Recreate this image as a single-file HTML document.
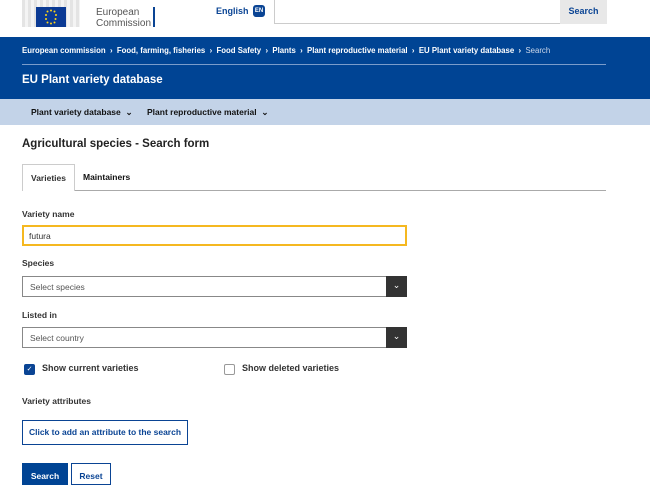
<!DOCTYPE html>
<html><head><meta charset="utf-8"><style>
*{box-sizing:border-box;margin:0;padding:0}
body{width:650px;height:483px;overflow:hidden;background:#fff;font-family:"Liberation Sans",Arial,sans-serif;color:#333;position:relative}
.a{position:absolute}
.b{font-weight:bold}
</style></head><body>
<div class="a" style="left:22px;top:0;width:58px;height:27px;background:repeating-linear-gradient(90deg,#e4e4e4 0 3px,#f4f4f4 3px 6px)"></div>
<div class="a" style="left:36px;top:7px;width:30px;height:20px;background:#0b3a94"></div>
<svg class="a" style="left:36px;top:7px" width="30" height="20"><g fill="#ffd617">
<circle cx="15" cy="3.5" r="1"/><circle cx="18.5" cy="4.5" r="1"/><circle cx="20" cy="8" r="1"/><circle cx="19.5" cy="12" r="1"/><circle cx="18.5" cy="15.5" r="1"/><circle cx="15" cy="16.5" r="1"/><circle cx="11.5" cy="15.5" r="1"/><circle cx="10" cy="12" r="1"/><circle cx="10" cy="8" r="1"/><circle cx="11.5" cy="4.5" r="1"/></g></svg>
<div class="a" style="left:96px;top:7px;font-size:10px;line-height:11px;color:#555">European<br>Commission</div>
<div class="a" style="left:153px;top:7px;width:1.5px;height:20px;background:#0a4494"></div>
<div class="a b" style="left:216px;top:6px;font-size:9px;color:#0a4494">English</div>
<div class="a b" style="left:253px;top:5px;width:12px;height:12px;border-radius:3px;background:#0a4494;color:#fff;font-size:6px;text-align:center;line-height:12px">EN</div>
<div class="a" style="left:274px;top:-1px;width:333px;height:25px;border:1px solid #ccc"></div>
<div class="a b" style="left:560px;top:0;width:47px;height:24px;background:#e8e8e8;font-size:9px;color:#0a4494;text-align:center;line-height:22px">Search</div>
<div class="a" style="left:0;top:37px;width:650px;height:62px;background:#004494"></div>
<div class="a b" style="left:22px;top:46px;font-size:7.8px;color:#fff;white-space:nowrap">European commission &nbsp;›&nbsp; Food, farming, fisheries &nbsp;›&nbsp; Food Safety &nbsp;›&nbsp; Plants &nbsp;›&nbsp; Plant reproductive material &nbsp;›&nbsp; EU Plant variety database &nbsp;›&nbsp; <span style="font-weight:normal;color:#cdd8ea">Search</span></div>
<div class="a" style="left:22px;top:64px;width:584px;height:1px;background:#7a9ccb"></div>
<div class="a b" style="left:22px;top:74px;font-size:11.5px;color:#fff">EU Plant variety database</div>
<div class="a" style="left:0;top:99px;width:650px;height:26px;background:#c3d3e8"></div>
<div class="a b" style="left:31px;top:107px;font-size:8.5px;color:#111">Plant variety database &nbsp;⌄</div>
<div class="a b" style="left:147px;top:107px;font-size:8.5px;color:#111">Plant reproductive material &nbsp;⌄</div>
<div class="a b" style="left:22px;top:138px;font-size:11.5px;color:#222">Agricultural species - Search form</div>
<div class="a" style="left:22px;top:190px;width:584px;height:1px;background:#aaa"></div>
<div class="a b" style="left:22px;top:164px;width:53px;height:27px;border:1px solid #ccc;border-bottom:none;background:#fff;font-size:8.5px;text-align:center;line-height:26px">Varieties</div>
<div class="a b" style="left:83px;top:172px;font-size:8.5px;color:#111">Maintainers</div>
<div class="a b" style="left:22px;top:209px;font-size:8.5px">Variety name</div>
<div class="a" style="left:22px;top:225px;width:385px;height:21px;border:2px solid #f5b820;font-size:8.5px;padding:4px 5px">futura</div>
<div class="a b" style="left:22px;top:258px;font-size:8.5px">Species</div>
<div class="a" style="left:22px;top:276px;width:385px;height:21px;border:1px solid #888;font-size:8.5px;padding:5px 7px;color:#555">Select species</div>
<div class="a" style="left:386px;top:276px;width:21px;height:21px;background:#333;color:#fff;font-size:9px;text-align:center;line-height:18px">⌄</div>
<div class="a b" style="left:22px;top:310px;font-size:8.5px">Listed in</div>
<div class="a" style="left:22px;top:327px;width:385px;height:21px;border:1px solid #888;font-size:8.5px;padding:5px 7px;color:#555">Select country</div>
<div class="a" style="left:386px;top:327px;width:21px;height:21px;background:#333;color:#fff;font-size:9px;text-align:center;line-height:18px">⌄</div>
<div class="a" style="left:24px;top:364px;width:11px;height:11px;border-radius:2px;background:#0a4494;color:#fff;font-size:7px;text-align:center;line-height:11px">✓</div>
<div class="a b" style="left:42px;top:363px;font-size:9px">Show current varieties</div>
<div class="a" style="left:224px;top:364px;width:11px;height:11px;border-radius:2px;border:1px solid #999"></div>
<div class="a b" style="left:242px;top:363px;font-size:9px">Show deleted varieties</div>
<div class="a b" style="left:22px;top:396px;font-size:8.5px">Variety attributes</div>
<div class="a b" style="left:22px;top:420px;width:166px;height:25px;border:1.5px solid #0a4494;font-size:8.5px;color:#0a4494;text-align:center;line-height:22px">Click to add an attribute to the search</div>
<div class="a b" style="left:22px;top:463px;width:46px;height:22px;background:#004494;color:#fff;font-size:8.5px;text-align:center;line-height:26px">Search</div>
<div class="a b" style="left:71px;top:463px;width:40px;height:22px;border:1.5px solid #0a4494;color:#0a4494;font-size:8.5px;text-align:center;line-height:24px">Reset</div>
</body></html>
